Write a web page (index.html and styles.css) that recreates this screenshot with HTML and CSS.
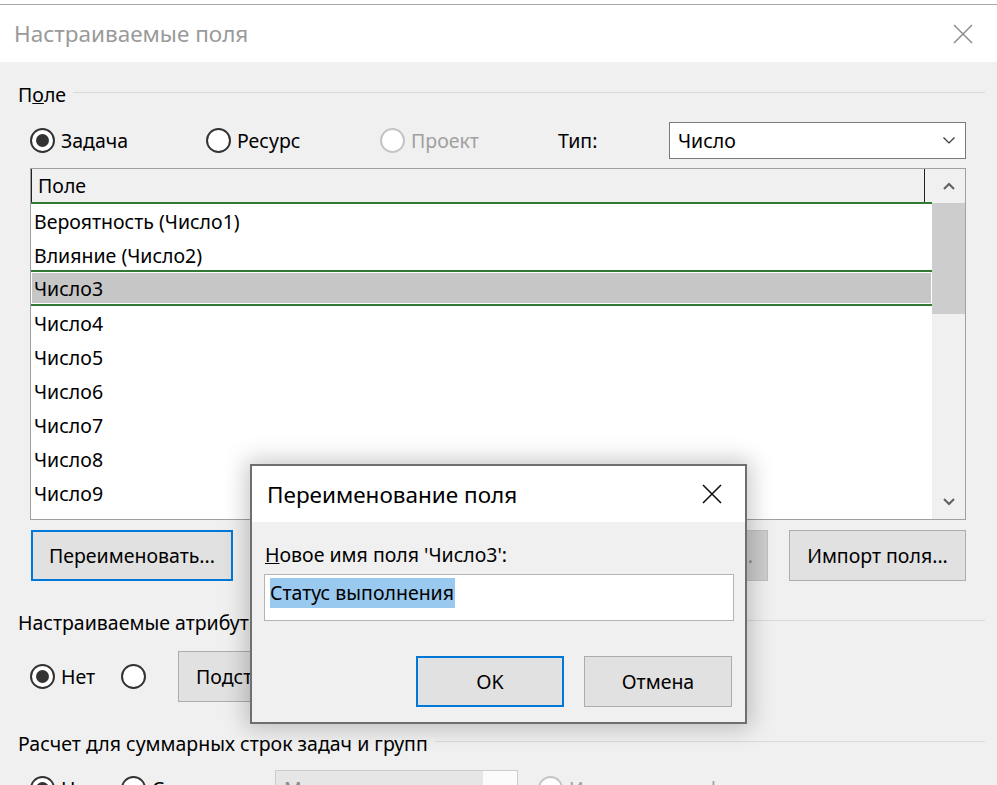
FILE: index.html
```html
<!DOCTYPE html>
<html lang="ru">
<head>
<meta charset="utf-8">
<title>Настраиваемые поля</title>
<link rel="stylesheet" href="styles.css">
</head>
<body>
<div class="win">
  <div class="titlebar">
    <span class="title">Настраиваемые поля</span>
    <svg class="x-icon" width="20" height="20" viewBox="0 0 20 20"><path d="M1 1L19 19M19 1L1 19" stroke="#8c8c8c" stroke-width="1.5" fill="none"/></svg>
  </div>
  <div class="main">
    <div class="ghead"><span>П<u>о</u>ле</span></div>
    <div class="indent typerow">
      <label class="radio"><span class="rb on"></span>Задача</label>
      <label class="radio"><span class="rb"></span>Ресурс</label>
      <label class="radio dis"><span class="rb"></span>Проект</label>
      <span class="tlabel">Тип:</span>
      <div class="select"><span>Число</span><svg width="12" height="7" viewBox="0 0 12 7"><path d="M0.5 0.5L6 6L11.5 0.5" stroke="#333" stroke-width="1.2" fill="none"/></svg></div>
    </div>
    <div class="indent list">
      <div class="lcol">
        <div class="lhead"><div class="hcell">Поле</div></div>
        <div class="lrow">Вероятность (Число1)</div>
        <div class="lrow">Влияние (Число2)</div>
        <div class="lrow sel">Число3</div>
        <div class="lrow">Число4</div>
        <div class="lrow">Число5</div>
        <div class="lrow">Число6</div>
        <div class="lrow">Число7</div>
        <div class="lrow">Число8</div>
        <div class="lrow">Число9</div>
      </div>
      <div class="sbar">
        <div class="sb-btn"><svg width="12" height="8" viewBox="0 0 12 8"><path d="M1 7L6 2L11 7" stroke="#606060" stroke-width="2" fill="none"/></svg></div>
        <div class="thumb"></div>
        <div class="sb-fill"></div>
        <div class="sb-btn"><svg width="12" height="8" viewBox="0 0 12 8"><path d="M1 1L6 6L11 1" stroke="#606060" stroke-width="2" fill="none"/></svg></div>
      </div>
    </div>
    <div class="indent btnrow">
      <div class="btn primary rename">Переименовать...</div>
      <div class="btngrp">
        <div class="btn disabled addent">Добавить в корпоративные...</div>
        <div class="btn import">Импорт поля...</div>
      </div>
    </div>
    <div class="ghead g2"><span>Настраиваемые атрибуты</span></div>
    <div class="indent attrrow">
      <label class="radio"><span class="rb on"></span>Нет</label>
      <label class="radio"><span class="rb"></span></label>
      <div class="btn lookup">Подстановка...</div>
    </div>
    <div class="ghead g3"><span>Расчет для суммарных строк задач и групп</span></div>
    <div class="indent calcrow">
      <label class="radio"><span class="rb on"></span>Нет</label>
      <label class="radio"><span class="rb"></span>Свертка:</label>
      <div class="dsel"><span>Максимум</span></div>
      <label class="radio dis"><span class="rb"></span>Использовать формулу</label>
    </div>
  </div>

  <div class="dialog">
    <div class="dtitle">
      <span>Переименование поля</span>
      <svg width="20" height="20" viewBox="0 0 20 20"><path d="M1 1L19 19M19 1L1 19" stroke="#111" stroke-width="1.6" fill="none"/></svg>
    </div>
    <div class="dbody">
      <div class="dlabel"><u>Н</u>овое имя поля 'Число3':</div>
      <div class="dinput"><span class="selected">Статус выполнения</span></div>
      <div class="dbtns">
        <div class="btn primary dbtn">OK</div>
        <div class="btn dbtn">Отмена</div>
      </div>
    </div>
  </div>
</div>
</body>
</html>
```
FILE: styles.css
```css
* { box-sizing: border-box; }
html, body { margin: 0; padding: 0; }
body {
  width: 997px;
  height: 785px;
  overflow: hidden;
  background: #fff;
  font-family: "Noto Sans", "Open Sans", sans-serif;
  font-size: 19.5px;
  color: #000;
}
.win {
  position: relative;
  margin-top: 4px;
  border-top: 1px solid #a8a8a8;
  height: 781px;
  background: #f0f0f0;
}
.titlebar {
  height: 57px;
  background: #fff;
  display: flex;
  align-items: center;
  justify-content: space-between;
  padding: 0 24px 0 14px;
}
.title { font-size: 22.5px; color: #9a9a9a; }

.main { padding: 20px 12px 0 18px; }
.ghead {
  display: flex;
  align-items: center;
  height: 24px;
  gap: 7px;
  white-space: nowrap;
}
.ghead::after {
  content: "";
  flex: 1;
  border-top: 1px solid #dadada;
  margin-bottom: 3px;
}
.indent { margin: 0 19px 0 12px; }

.typerow {
  margin-top: 16px;
  height: 37px;
  display: grid;
  grid-template-columns: 176px 174px 178px 111px 1fr;
  align-items: center;
}
.radio {
  display: flex;
  align-items: center;
  gap: 6px;
  white-space: nowrap;
}
.rb {
  width: 25px;
  height: 25px;
  flex: none;
  border: 2px solid #333;
  border-radius: 50%;
  background: #fff;
  position: relative;
}
.rb.on::after {
  content: "";
  position: absolute;
  inset: 4px;
  border-radius: 50%;
  background: #333;
}
.radio.dis { color: #a0a0a0; }
.radio.dis .rb { border-color: #c4c4c4; }
.select {
  height: 37px;
  background: #fff;
  border: 1px solid #7a7a7a;
  display: flex;
  align-items: center;
  justify-content: space-between;
  padding: 0 10px 0 8px;
}

.list {
  margin-top: 9px;
  height: 352px;
  border: 1px solid #a0a0a0;
  background: #fff;
  display: grid;
  grid-template-columns: 1fr 33px;
  overflow: hidden;
}
.lcol { overflow: hidden; }
.lhead {
  height: 35px;
  background: #f0f0f0;
  border-bottom: 2px solid #327a32;
  padding-right: 7px;
}
.hcell {
  height: 100%;
  border-left: 1px solid #222;
  border-right: 1px solid #222;
  padding-left: 6px;
  display: flex;
  align-items: center;
}
.lrow {
  height: 34px;
  padding-left: 3px;
  display: flex;
  align-items: center;
  white-space: nowrap;
}
.lrow.sel {
  height: 36px;
  margin-top: -2px;
  background: #c6c6c6;
  border-top: 2px solid #327a32;
  border-bottom: 2px solid #327a32;
  box-shadow: inset 0 0 0 1px #fff;
}
.sbar {
  background: #f0f0f0;
  display: flex;
  flex-direction: column;
}
.sb-btn {
  height: 34px;
  display: flex;
  align-items: center;
  justify-content: center;
}
.thumb { height: 111px; background: #cdcdcd; }
.sb-fill { flex: 1; }

.btn {
  background: #e1e1e1;
  border: 1px solid #adadad;
  display: flex;
  align-items: center;
  justify-content: center;
  white-space: nowrap;
  overflow: hidden;
}
.btn.primary { border: 2px solid #0078d7; }
.btn.disabled { background: #cccccc; border-color: #bfbfbf; color: #8a8a8a; }

.btnrow {
  margin-top: 10px;
  height: 51px;
  display: flex;
}
.rename { width: 202px; margin-left: 1px; }
.btngrp { margin-left: auto; display: flex; gap: 21px; }
.addent { width: 300px; justify-content: flex-end; padding-right: 14px; }
.import { width: 177px; }

.g2 { margin-top: 29px; }
.attrrow {
  margin-top: 17px;
  height: 51px;
  display: grid;
  grid-template-columns: 91px 57px 200px;
  align-items: stretch;
}
.attrrow .radio { align-self: center; }
.lookup { justify-content: flex-start; padding-left: 17px; }

.g3 { margin-top: 29px; }
.calcrow {
  margin-top: 15px;
  height: 37px;
  display: grid;
  grid-template-columns: 91px 154px 263px 1fr;
  align-items: center;
}
.dsel {
  width: 243px;
  height: 37px;
  border: 1px solid #cccccc;
  background: linear-gradient(to right, #e6e6e6 0, #e6e6e6 207px, #fbfbfb 207px);
  display: flex;
  align-items: center;
  padding-left: 8px;
  color: #8a8a8a;
}

.dialog {
  position: absolute;
  left: 250px;
  top: 459px;
  width: 497px;
  height: 260px;
  border: 2px solid #6f6f6f;
  background: #f0f0f0;
  box-shadow: 0 0 22px 4px rgba(0, 0, 0, 0.22);
}
.dtitle {
  height: 56px;
  background: #fff;
  display: flex;
  align-items: center;
  justify-content: space-between;
  padding: 0 23px 0 15px;
  font-size: 22.5px;
}
.dbody { padding: 21px 11px 0 12px; }
.dlabel { height: 24px; line-height: 24px; padding-left: 1px; }
.dinput {
  margin-top: 7px;
  height: 47px;
  background: #fff;
  border: 1px solid #b4b4b4;
  padding: 3px 0 0 5px;
}
.selected {
  display: inline-block;
  height: 30px;
  line-height: 30px;
  background: #99c9ef;
  padding-right: 1px;
}
.dbtns {
  margin-top: 35px;
  display: flex;
  justify-content: flex-end;
  gap: 20px;
  padding-right: 2px;
}
.dbtn { width: 148px; height: 51px; }
```
